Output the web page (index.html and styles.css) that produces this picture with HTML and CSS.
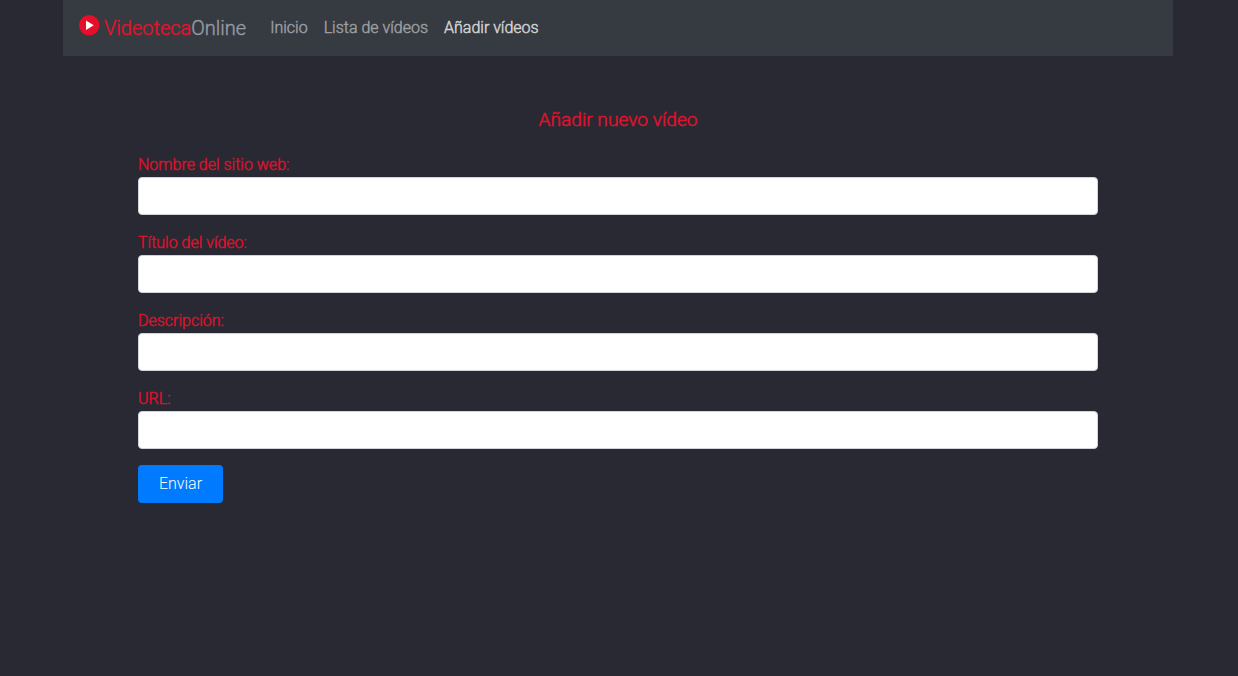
FILE: index.html
```html
<!DOCTYPE html>
<html lang="es">
<head>
<meta charset="utf-8">
<title>VideotecaOnline</title>
<link rel="stylesheet" href="styles.css">
</head>
<body>
<div class="container">
  <nav class="navbar">
    <a class="brand" href="#">
      <svg class="brand-icon" viewBox="0 0 20 20" aria-hidden="true"><circle cx="10" cy="10" r="10" fill="#e50f2b"/><path d="M6.8 5.4v9.2l7.6-4.6z" fill="#fff"/></svg>
      <span class="brand-text"><span class="brand-accent">Videoteca</span>Online</span>
    </a>
    <div class="nav-links">
      <a class="nav-link" href="#">Inicio</a>
      <a class="nav-link" href="#">Lista de vídeos</a>
      <a class="nav-link active" href="#">Añadir vídeos</a>
    </div>
  </nav>
  <main class="content">
    <h1 class="title">Añadir nuevo vídeo</h1>
    <form class="form">
      <div class="group"><label class="label" for="sitio">Nombre del sitio web:</label><input class="control" id="sitio" type="text"></div>
      <div class="group"><label class="label" for="titulo">Título del vídeo:</label><input class="control" id="titulo" type="text"></div>
      <div class="group"><label class="label" for="descripcion">Descripción:</label><input class="control" id="descripcion" type="text"></div>
      <div class="group"><label class="label" for="url">URL:</label><input class="control" id="url" type="text"></div>
      <button class="submit" type="button">Enviar</button>
    </form>
  </main>
</div>
</body>
</html>
```
FILE: styles.css
```css
* { box-sizing: border-box; }
body {
  margin: 0;
  min-height: 100vh;
  background: #292934;
  font: 300 16px/24px Roboto, sans-serif;
}
.container { width: 1110px; margin-left: 63px; }
.navbar {
  display: flex;
  height: 56px;
  padding: 8px 16px;
  background: #363a41;
}
a { text-decoration: none; }
.brand {
  display: flex;
  gap: 5px;
  margin-right: 16px;
  padding-top: 5px;
  color: #959aa3;
  font-size: 20px;
  line-height: 30px;
}
.brand-icon { width: 20.5px; height: 20.5px; margin-top: 2px; }
.brand-text { margin-left: -0.5px; -webkit-text-stroke: 0.4px; }
.brand-accent { color: #e0142d; }
.nav-links { display: flex; }
.nav-link { padding: 8px; color: #9b9da0; -webkit-text-stroke: 0.5px; }
.nav-link.active { color: #d0d2d3; }
.content { padding: 51px 75px 0; }
.title {
  margin: 0 0 20px;
  color: #e0122c;
  font-size: 19.2px;
  font-weight: 300;
  line-height: 26px;
  text-align: center;
  -webkit-text-stroke: 0.5px;
}
.group { margin-bottom: 16px; }
.label { display: block; height: 24px; color: #da122c; -webkit-text-stroke: 0.5px; }
.control {
  display: block;
  width: 100%;
  height: 38px;
  padding: 6px 12px;
  border: 1px solid #ced4da;
  border-radius: 4px;
  background: #fff;
  font: inherit;
}
.submit {
  display: block;
  width: 85px;
  height: 38px;
  padding: 0;
  border: 0;
  border-radius: 4px;
  background: #007bff;
  color: #fff;
  font: inherit;
}
```
